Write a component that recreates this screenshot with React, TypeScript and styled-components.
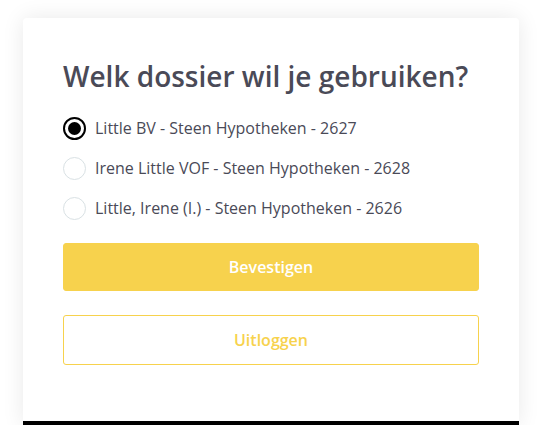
import * as React from "react";
import styled, { createGlobalStyle } from "styled-components";

const GlobalStyle = createGlobalStyle`
  body {
    margin: 0;
    background: #ffffff;
    font-family: "Open Sans", "Noto Sans", sans-serif;
  }
`;

const Page = styled.div`
  padding: 18px 20px 0 23px;
`;

const Card = styled.div`
  width: 496px;
  box-sizing: border-box;
  padding: 41px 40px 56px;
  background: #ffffff;
  border-radius: 4px 4px 0 0;
  border-bottom: 4px solid #000000;
  box-shadow: 0 0 22px rgba(0, 0, 0, 0.09);
`;

const Title = styled.h1`
  margin: 0 0 15px;
  font-size: 28px;
  line-height: 34px;
  font-weight: 600;
  color: #4a4a57;
`;

const Options = styled.div`
  display: flex;
  flex-direction: column;
  margin-bottom: 15px;
`;

const Option = styled.label`
  display: flex;
  align-items: center;
  gap: 9px;
  height: 40px;
  font-size: 16px;
  color: #4a4a57;
  cursor: pointer;
`;

const Radio = styled.span<{ $checked: boolean }>`
  width: 23px;
  height: 23px;
  box-sizing: border-box;
  border-radius: 50%;
  border: ${(p) => (p.$checked ? "2px solid #000000" : "1px solid #d9e1e4")};
  display: flex;
  align-items: center;
  justify-content: center;
  background: #ffffff;

  &::after {
    content: "";
    display: ${(p) => (p.$checked ? "block" : "none")};
    width: 13px;
    height: 13px;
    border-radius: 50%;
    background: #000000;
  }
`;

const Button = styled.button<{ $variant: "primary" | "outline" }>`
  display: block;
  width: 100%;
  box-sizing: border-box;
  height: ${(p) => (p.$variant === "primary" ? "48px" : "50px")};
  border-radius: 3px;
  border: 1px solid #f7d24d;
  background: ${(p) => (p.$variant === "primary" ? "#f7d24d" : "#ffffff")};
  color: ${(p) => (p.$variant === "primary" ? "#ffffff" : "#f7d24d")};
  font-family: "Open Sans", "Noto Sans", sans-serif;
  font-size: 16px;
  font-weight: 600;
  cursor: pointer;

  & + & {
    margin-top: 24px;
  }
`;

const dossiers = [
  "Little BV - Steen Hypotheken - 2627",
  "Irene Little VOF - Steen Hypotheken - 2628",
  "Little, Irene (I.) - Steen Hypotheken - 2626",
];

export default function App() {
  const [selected, setSelected] = React.useState(0);
  return (
    <Page>
      <GlobalStyle />
      <Card>
        <Title>Welk dossier wil je gebruiken?</Title>
        <Options>
          {dossiers.map((d, i) => (
            <Option key={i} onClick={() => setSelected(i)}>
              <Radio $checked={selected === i} />
              {d}
            </Option>
          ))}
        </Options>
        <Button $variant="primary">Bevestigen</Button>
        <Button $variant="outline">Uitloggen</Button>
      </Card>
    </Page>
  );
}
